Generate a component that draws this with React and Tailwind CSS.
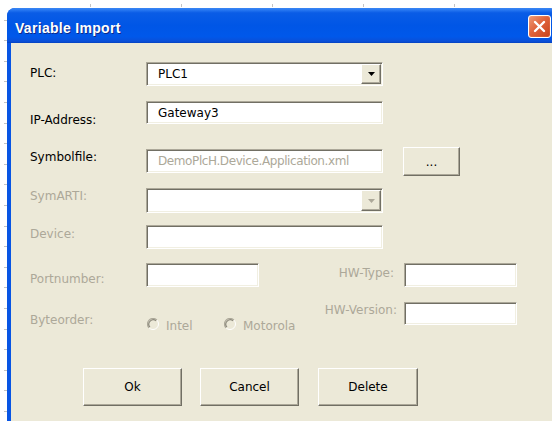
import React from "react";

const sunken =
  "border border-t-[#aca899] border-l-[#aca899] border-r-white border-b-white shadow-[inset_1px_1px_0_#716f64,inset_-1px_-1px_0_#f1efe2] bg-white";
const raised =
  "border border-t-white border-l-white border-r-[#716f64] border-b-[#716f64] shadow-[inset_-1px_-1px_0_#aca899] bg-[#ece9d8]";

function Label({ children, disabled, className = "" }) {
  return (
    <div
      className={`shrink-0 whitespace-nowrap ${disabled ? "text-[#aca899]" : "text-black"} ${className}`}
    >
      {children}
    </div>
  );
}

function Arrow({ disabled }) {
  return (
    <div className={`${raised} w-[20px] h-full flex items-center justify-center`}>
      <svg width="7" height="4" viewBox="0 0 7 4">
        <path d="M0 0H7L3.5 4Z" fill={disabled ? "#aca899" : "#000"} />
      </svg>
    </div>
  );
}

function Radio({ label, className = "" }) {
  return (
    <div className={`flex items-start shrink-0 ${className}`}>
      <svg width="12" height="12" viewBox="0 0 12 12" className="mt-[16px] shrink-0">
        <circle cx="6" cy="6" r="5.5" fill="#ece9d8" />
        <path d="M2.1 9.9A5.5 5.5 0 0 1 9.9 2.1" fill="none" stroke="#aca899" strokeWidth="1.2" />
        <path d="M2.9 9.1A4.4 4.4 0 0 1 9.1 2.9" fill="none" stroke="#8c897c" strokeWidth="1.2" />
        <path d="M2.1 9.9A5.5 5.5 0 0 0 9.9 2.1" fill="none" stroke="#ffffff" strokeWidth="1" />
      </svg>
      <span className="ml-[7px] mt-[17px] text-[#aca899] whitespace-nowrap">{label}</span>
    </div>
  );
}

function Button({ children, className = "" }) {
  return (
    <div className={`${raised} h-[38px] flex items-center justify-center text-black shrink-0 ${className}`}>
      {children}
    </div>
  );
}

export default function App() {
  return (
    <div className="w-[552px] h-[421px] overflow-hidden bg-white flex font-['DejaVu_Sans',sans-serif] text-[12px] leading-[14px]">
      {/* ruler ticks along the left */}
      <div className="w-[7px] h-full shrink-0 flex">
        <div className="ml-[4px] w-[3px] h-full bg-[repeating-linear-gradient(180deg,transparent_0px,transparent_19.6px,#c4c4c4_19.6px,#c4c4c4_20.6px)]" />
      </div>

      <div className="flex flex-col shrink-0">
        {/* ruler ticks along the top */}
        <div className="h-[8px] flex items-start shrink-0">
          <div className="ml-[83px] mt-[4px] w-px h-[3px] bg-[#c4c4c4]" />
          <div className="ml-[90px] mt-[4px] w-px h-[3px] bg-[#c4c4c4]" />
          <div className="ml-[90px] mt-[4px] w-px h-[3px] bg-[#c4c4c4]" />
          <div className="ml-[90px] mt-[4px] w-px h-[3px] bg-[#c4c4c4]" />
          <div className="ml-[90px] mt-[4px] w-px h-[3px] bg-[#c4c4c4]" />
        </div>

        {/* dialog window */}
        <div className="w-[550px] flex-1 flex flex-col rounded-t-[8px] overflow-hidden bg-[#0855e4]">
          <div className="h-[35px] shrink-0 flex items-start justify-between bg-[linear-gradient(180deg,#3a86f3_0%,#2a7af2_5%,#0a5ce6_14%,#0056e6_50%,#0058ea_82%,#0a4fd8_95%,#0442c0_100%)]">
            <div className="ml-[8px] mt-[12px] font-['Liberation_Sans',Arial,sans-serif] font-bold text-[14px] leading-[16px] tracking-[0.3px] text-white [text-shadow:1px_1px_0_#0c2a8a]">
              Variable Import
            </div>
            <div className="mt-[7px] mr-[6px] w-[23px] h-[23px] rounded-[3px] border border-white bg-[linear-gradient(135deg,#ee9a76_0%,#e0643c_45%,#c8421a_100%)] flex items-center justify-center shadow-[inset_0_0_1px_#ffd0b8]">
              <svg width="13" height="13" viewBox="0 0 13 13">
                <path d="M2 2L11 11M11 2L2 11" stroke="#fff" strokeWidth="2.4" strokeLinecap="round" />
              </svg>
            </div>
          </div>

          <div className="flex-1 ml-[4px] bg-[#ece9d8] pl-[19px] pt-[19px] flex flex-col">
            {/* PLC */}
            <div className="flex items-start h-[24px] shrink-0">
              <Label className="w-[116px] mt-[4px]">PLC:</Label>
              <div className={`${sunken} w-[237px] h-[24px] flex items-stretch p-[1px]`}>
                <div className="flex-1 flex items-center pl-[10px] text-black">PLC1</div>
                <Arrow />
              </div>
            </div>

            {/* IP-Address */}
            <div className="flex items-start h-[23px] mt-[15px] shrink-0">
              <Label className="w-[116px] mt-[12px]">IP-Address:</Label>
              <div className={`${sunken} w-[237px] h-[23px] flex items-center pl-[11px] text-black`}>Gateway3</div>
            </div>

            {/* Symbolfile */}
            <div className="flex items-start h-[29px] mt-[23px] shrink-0">
              <Label className="w-[116px] mt-[3px]">Symbolfile:</Label>
              <div className={`${sunken} mt-[2px] w-[237px] h-[24px] flex items-center pl-[11px] text-[#aca899] tracking-[-0.4px]`}>
                DemoPlcH.Device.Application.xml
              </div>
              <Button className="ml-[20px] w-[57px] !h-[29px]">...</Button>
            </div>

            {/* SymARTI */}
            <div className="flex items-start h-[25px] mt-[12px] shrink-0">
              <Label disabled className="w-[116px] mt-[1px]">SymARTI:</Label>
              <div className={`${sunken} w-[237px] h-[25px] flex items-stretch p-[1px]`}>
                <div className="flex-1" />
                <Arrow disabled />
              </div>
            </div>

            {/* Device */}
            <div className="flex items-start h-[24px] mt-[12px] shrink-0">
              <Label disabled className="w-[116px] mt-[2px]">Device:</Label>
              <div className={`${sunken} w-[237px] h-[24px]`} />
            </div>

            {/* Portnumber / HW-Type */}
            <div className="flex items-start h-[24px] mt-[14px] shrink-0">
              <Label disabled className="w-[116px] mt-[9px]">Portnumber:</Label>
              <div className={`${sunken} w-[113px] h-[24px] shrink-0`} />
              <Label disabled className="w-[135px] mt-[3px] text-right">HW-Type:</Label>
              <div className={`${sunken} ml-[10px] w-[113px] h-[24px] shrink-0`} />
            </div>

            {/* Byteorder / HW-Version */}
            <div className="flex items-start h-[23px] mt-[15px] shrink-0">
              <Label disabled className="w-[116px] mt-[11px]">Byteorder:</Label>
              <div className="w-[150px] flex shrink-0">
                <Radio label="Intel" className="ml-[1px] w-[77px]" />
                <Radio label="Motorola" />
              </div>
              <Label disabled className="w-[101px] mt-[1px] text-right">HW-Version:</Label>
              <div className={`${sunken} ml-[7px] w-[113px] h-[23px] shrink-0`} />
            </div>

            {/* action buttons */}
            <div className="flex items-start mt-[43px] shrink-0">
              <Button className="ml-[53px] w-[99px]">Ok</Button>
              <Button className="ml-[18px] w-[99px]">Cancel</Button>
              <Button className="ml-[19px] w-[100px]">Delete</Button>
            </div>
          </div>
        </div>
      </div>
    </div>
  );
}
